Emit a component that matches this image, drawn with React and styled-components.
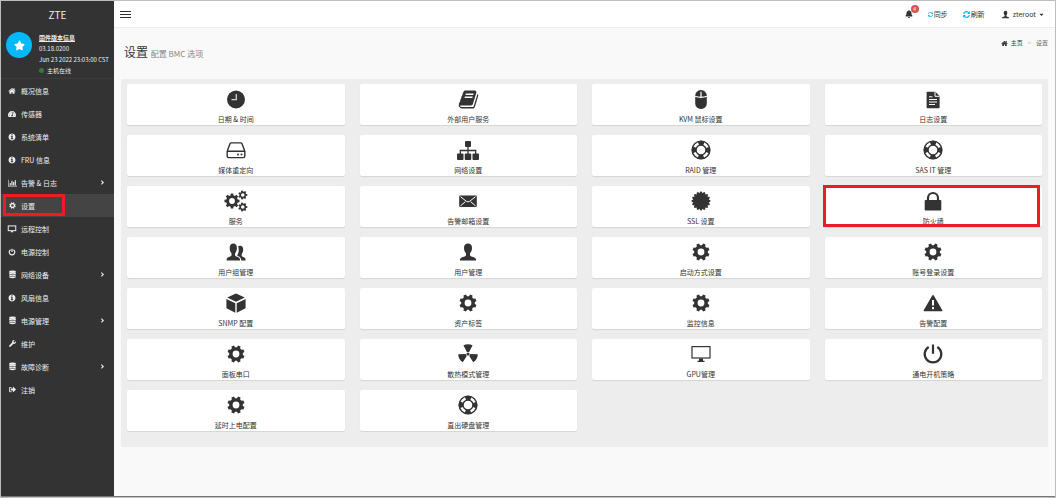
import styled, { createGlobalStyle } from "styled-components"
import {
    FaAngleRight,
    FaBell,
    FaCaretDown,
    FaSignOutAlt,
    FaStar,
    FaSyncAlt,
    FaTachometerAlt,
    FaWrench
} from "react-icons/fa"

const HOME = "M1472 992v480q0 26-19 45t-45 19h-384v-384h-256v384h-384q-26 0-45-19t-19-45v-480q0-1 .5-3t.5-3l575-474 575 474q1 2 1 6zm223-69l-62 74q-8 9-21 11h-3q-13 0-21-7l-692-577-692 577q-12 8-24 7-13-2-21-11l-62-74q-8-10-7-23.5t11-21.5l719-599q32-26 76-26t76 26l244 204v-195q0-14 9-23t23-9h192q14 0 23 9t9 23v408l219 182q10 8 11 21.5t-7 23.5z"
const INFO = "M1152 1376v-160q0-14-9-23t-23-9h-96v-512q0-14-9-23t-23-9h-320q-14 0-23 9t-9 23v160q0 14 9 23t23 9h96v320h-96q-14 0-23 9t-9 23v160q0 14 9 23t23 9h448q14 0 23-9t9-23zm-128-896v-160q0-14-9-23t-23-9h-192q-14 0-23 9t-9 23v160q0 14 9 23t23 9h192q14 0 23-9t9-23zm640 416q0 209-103 385.5t-279.5 279.5-385.5 103-385.5-103-279.5-279.5-103-385.5 103-385.5 279.5-279.5 385.5-103 385.5 103 279.5 279.5 103 385.5z"
const CHART = "M640 896v512h-256v-512h256zm384-512v1024h-256v-1024h256zm1024 1152v128h-2048v-1536h128v1408h1920zm-640-896v768h-256v-768h256zm384-384v1152h-256v-1152h256z"
const BOOK = "M1703 478q40 57 18 129l-275 906q-19 64-76.5 107.5t-122.5 43.5h-923q-77 0-148.5-53.5t-99.5-131.5q-24-67-2-127 0-4 3-27t4-37q1-8-3-21.5t-3-19.5q2-11 8-21t16.5-23.5 16.5-23.5q23-38 45-91.5t30-91.5q3-10 .5-30t-.5-28q3-11 17-28t17-23q21-36 42-92t25-90q1-9-2.5-32t.5-28q4-13 22-30.5t22-22.5q19-26 42.5-84.5t27.5-96.5q1-8-3-25.5t-2-26.5q2-8 9-18t18-23 17-21q8-12 16.5-30.5t15-35 16-36 19.5-32 26.5-23.5 36-11.5 47.5 5.5l-1 3q38-9 51-9h761q74 0 114 56t18 130l-274 906q-36 119-71.5 153.5t-128.5 34.5h-869q-27 0-38 15-11 16-1 43 24 70 144 70h923q29 0 56-15.5t35-41.5l300-987q7-22 5-57 38 15 59 43zm-1064 2q-4 13 2 22.5t20 9.5h608q13 0 25.5-9.5t16.5-22.5l21-64q4-13-2-22.5t-20-9.5h-608q-13 0-25.5 9.5t-16.5 22.5zm-83 256q-4 13 2 22.5t20 9.5h608q13 0 25.5-9.5t16.5-22.5l21-64q4-13-2-22.5t-20-9.5h-608q-13 0-25.5 9.5t-16.5 22.5z"
const PERSON = "M12 3.6c-2.6 0-4 1.8-4 4.4 0 2.3.8 4.2 2 5.3v1.7c0 1-.8 1.3-2.2 1.8-2.3.8-4 1.5-4 3.6h16.4c0-2.1-1.7-2.8-4-3.6-1.4-.5-2.2-.8-2.2-1.8v-1.7c1.2-1.1 2-3 2-5.3 0-2.6-1.4-4.4-4-4.4z"

function polar(r, deg, cx = 12, cy = 12) {
    const a = deg * Math.PI / 180
    return `${(cx + r * Math.cos(a)).toFixed(2)} ${(cy + r * Math.sin(a)).toFixed(2)}`
}

function sealPath() {
    let points = []
    for (let i = 0; i < 16; i++) {
        const a = i * 22.5
        points.push(polar(7.8, a - 11.25), polar(9.4, a - 4), polar(9.4, a + 4))
    }
    return `M${points.join("L")}z`
}

function bladePath(mid) {
    return `M${polar(2.4, mid - 28)}L${polar(9.8, mid - 28)}A9.8 9.8 0 0 1 ${polar(9.8, mid + 28)}L${polar(2.4, mid + 28)}z`
}

function gearPath({ cx = 12, cy = 12, outer, root, hole, teeth = 8, turn = 0 }) {
    const step = 360 / teeth
    let points = []
    for (let i = 0; i < teeth; i++) {
        const a = turn + i * step
        points.push(
            polar(root, a - step * 0.32, cx, cy),
            polar(outer, a - step * 0.2, cx, cy),
            polar(outer, a + step * 0.2, cx, cy),
            polar(root, a + step * 0.32, cx, cy)
        )
    }
    return `M${points.join("L")}zM${cx - hole} ${cy}a${hole} ${hole} 0 1 0 ${hole * 2} 0a${hole} ${hole} 0 1 0 ${-hole * 2} 0z`
}

function Awesome({ d, size, wide }) {
    return (
        <svg width={wide ? size + 1 : size} height={size} viewBox={wide ? "0 0 2048 1792" : "0 0 1792 1792"} fill="currentColor" aria-hidden="true">
            <path d={d} />
        </svg>
    )
}

function Drawing({ size = 24, children }) {
    return (
        <svg width={size} height={size} viewBox="0 0 24 24" fill="currentColor" aria-hidden="true">
            {children}
        </svg>
    )
}

const Cog = ({ size }) => (
    <Drawing size={size}>
        <path fillRule="evenodd" d={gearPath({ outer: 8.7, root: 6.9, hole: 3.4, turn: 22.5 })} />
    </Drawing>
)

const Cogs = () => (
    <Drawing>
        <path fillRule="evenodd" d={gearPath({ cx: 8, outer: 7.6, root: 5.9, hole: 2.9 })} />
        <path fillRule="evenodd" d={gearPath({ cx: 18.8, cy: 6, outer: 4.6, root: 3.4, hole: 1.8, teeth: 7 })} />
        <path fillRule="evenodd" d={gearPath({ cx: 18.8, cy: 18, outer: 4.6, root: 3.4, hole: 1.8, teeth: 7 })} />
    </Drawing>
)

const Book = () => <Awesome d={BOOK} size={21} />

const Clock = () => (
    <Drawing>
        <circle cx="12" cy="12.5" r="9" />
        <path d="M12.3 7v5.6H7.5" fill="none" stroke="#d0d0d0" strokeWidth="1.3" />
    </Drawing>
)

const Mouse = () => (
    <Drawing>
        <rect x="6.2" y="3" width="11.6" height="19" rx="5.6" />
        <path d="M6 9.2q6 2.2 12 0M12 4.8v5" fill="none" stroke="#fff" strokeWidth="1.2" />
    </Drawing>
)

const FileText = () => (
    <Drawing>
        <path d="M5.6 5.500q0-.8.8-.8h8l4.200 4.200v11.500q0 .8-.8.8H6.400q-.8 0-.8-.8z" />
        <path d="M14 5v4.300h4.500M8 9.800h3.500M8 12.500h8M8 15h8M8 17.500h6" fill="none" stroke="#fff" strokeWidth="1" />
    </Drawing>
)

const Disk = () => (
    <Drawing>
        <path d="M3.2 13.2 6 5.700q.3-.8 1.200-.8h9.600q.9 0 1.200.8l2.800 7.500v5q0 1.400-1.400 1.400H4.600q-1.400 0-1.400-1.400zM3.200 13.200h17.600" fill="none" stroke="currentColor" strokeWidth="1.4" />
        <circle cx="14" cy="16.5" r="1" />
        <circle cx="17.5" cy="16.5" r="1" />
    </Drawing>
)

const Sitemap = () => (
    <Drawing>
        <rect x="9" y="3" width="6" height="6" rx="1" />
        <rect x="1" y="15.5" width="6.5" height="6.5" rx="1" />
        <rect x="8.75" y="15.5" width="6.5" height="6.5" rx="1" />
        <rect x="16.5" y="15.5" width="6.5" height="6.5" rx="1" />
        <path d="M12 8v8M4.3 16v-3.5h15.4V16" fill="none" stroke="currentColor" strokeWidth="1.3" />
    </Drawing>
)

const LifeRing = () => (
    <Drawing>
        <g fill="none" stroke="currentColor">
            <circle cx="12" cy="12" r="8.9" strokeWidth="1.4" />
            <circle cx="12" cy="12" r="5" strokeWidth="1.4" />
            <circle cx="12" cy="12" r="7" strokeWidth="4.4" strokeDasharray="5.5 5.495" strokeDashoffset="2.75" />
        </g>
    </Drawing>
)

const Envelope = () => (
    <Drawing>
        <rect x="3.2" y="6.5" width="17.6" height="11.5" rx="1" />
        <path d="m4.5 7.700 6 4.700q1.500 1 3 0l6-4.700M4.500 16.900l4.800-4.200M19.500 16.900l-4.800-4.200" fill="none" stroke="#fff" strokeWidth="1" />
    </Drawing>
)

const Seal = () => (
    <Drawing>
        <path d={sealPath()} />
    </Drawing>
)

const Lock = () => (
    <Drawing>
        <rect x="3.7" y="11" width="16.6" height="10.6" rx="1" />
        <path d="M7 11.500V9a5 5 0 0 1 10 0v2.500" fill="none" stroke="currentColor" strokeWidth="2.2" />
    </Drawing>
)

const Person = ({ size }) => (
    <Drawing size={size}>
        <path d={PERSON} />
    </Drawing>
)

const People = () => (
    <Drawing>
        <path d="M9.300 3.600c-2.400 0-3.600 1.700-3.600 4.300 0 2.300.7 4.200 1.800 5.300v1.800c0 1-.7 1.300-2 1.800-2 .8-3 1.500-3 3.600h13.600c0-2.100-1-2.800-3-3.600-1.300-.5-2-.8-2-1.800v-1.800c1.100-1.100 1.800-3 1.800-5.300 0-2.600-1.200-4.300-3.600-4.300z" />
        <path d="M16 5.800c2.200 0 3.200 1.500 3.200 3.700 0 2-.6 3.500-1.500 4.400v1.600c0 .8.6 1.100 1.600 1.500 1.600.6 2.300 1.300 2.300 3.400h-4.300c0-2-.9-3.300-2.900-4.200-.8-.4-1.100-.6-1.100-1.200 1.100-1.600 1.700-3.600 1.300-6.600-.1-1-.3-1.500-.5-2 .5-.4 1.100-.6 1.900-.6z" />
    </Drawing>
)

const Cube = () => (
    <Drawing>
        <path d="m12 2.600 8.800 3.900L12 10.800 3.200 6.500zM2.400 8l8.900 4.200v9.600L2.900 17.500q-.5-.3-.5-.9zM21.600 8l-8.900 4.200v9.600l8.400-4.300q.5-.3.5-.9z" />
    </Drawing>
)

const Warning = () => (
    <Drawing>
        <path d="M12 4q.5 0 .8.600l8.500 14.700q.5 1-.6 1H3.300q-1.100 0-.6-1l8.500-14.700q.3-.6.800-.6z" />
        <path d="M12 9v5.500M12 16v2.200" stroke="#fff" strokeWidth="2" />
    </Drawing>
)

const Radiation = () => (
    <Drawing>
        <circle cx="12" cy="12" r="1.6" />
        <path d={bladePath(-90) + bladePath(30) + bladePath(150)} />
    </Drawing>
)

const Monitor = ({ size, stroke = 1.2 }) => (
    <Drawing size={size}>
        <rect x="3" y="4.6" width="18" height="11.4" fill="none" stroke="currentColor" strokeWidth={stroke} />
        <path d="M10 16.500h4v2.200h1.500V20h-7v-1.300H10z" />
    </Drawing>
)

const Power = ({ size, stroke = 2.2 }) => (
    <Drawing size={size}>
        <path d="M7.700 5A8.300 8.300 0 1 0 16.300 5M12 2.500v9.300" fill="none" stroke="currentColor" strokeWidth={stroke} />
    </Drawing>
)

const Database = () => (
    <Drawing size={9}>
        <ellipse cx="12" cy="4.5" rx="9" ry="3.2" />
        <path d="M3 6.800q9 4 18 0v3q-9 4.500-18 0zM3 11.800q9 4 18 0v3q-9 4.500-18 0zM3 16.800q9 4 18 0v2.700q-9 5-18 0z" />
    </Drawing>
)

const menu = [
    { label: "概况信息", icon: <Awesome d={HOME} size={8} /> },
    { label: "传感器", icon: <FaTachometerAlt size={8} /> },
    { label: "系统清单", icon: <Awesome d={INFO} size={8} /> },
    { label: "FRU 信息", icon: <Awesome d={INFO} size={8} /> },
    { label: "告警 & 日志", icon: <Awesome d={CHART} size={8} wide />, nested: true },
    { label: "设置", icon: <Cog size={9} />, active: true },
    { label: "远程控制", icon: <Monitor size={10} stroke={2.4} /> },
    { label: "电源控制", icon: <Power size={8} stroke={3.6} /> },
    { label: "网络设备", icon: <Database />, nested: true },
    { label: "风扇信息", icon: <Awesome d={INFO} size={8} /> },
    { label: "电源管理", icon: <Database />, nested: true },
    { label: "维护", icon: <FaWrench size={7} /> },
    { label: "故障诊断", icon: <Database />, nested: true },
    { label: "注销", icon: <FaSignOutAlt size={7} /> }
]

const settings = [
    { label: "日期 & 时间", icon: <Clock /> },
    { label: "外部用户服务", icon: <Book /> },
    { label: "KVM 鼠标设置", icon: <Mouse /> },
    { label: "日志设置", icon: <FileText /> },
    { label: "媒体重定向", icon: <Disk /> },
    { label: "网络设置", icon: <Sitemap /> },
    { label: "RAID 管理", icon: <LifeRing /> },
    { label: "SAS IT 管理", icon: <LifeRing /> },
    { label: "服务", icon: <Cogs /> },
    { label: "告警邮箱设置", icon: <Envelope /> },
    { label: "SSL 设置", icon: <Seal /> },
    { label: "防火墙", icon: <Lock />, marked: true },
    { label: "用户组管理", icon: <People /> },
    { label: "用户管理", icon: <Person /> },
    { label: "启动方式设置", icon: <Cog /> },
    { label: "账号登录设置", icon: <Cog /> },
    { label: "SNMP 配置", icon: <Cube /> },
    { label: "资产标签", icon: <Cog /> },
    { label: "监控信息", icon: <Cog /> },
    { label: "告警配置", icon: <Warning /> },
    { label: "面板串口", icon: <Cog /> },
    { label: "散热模式管理", icon: <Radiation /> },
    { label: "GPU管理", icon: <Monitor /> },
    { label: "通电开机策略", icon: <Power /> },
    { label: "延时上电配置", icon: <Cog /> },
    { label: "直出硬盘管理", icon: <LifeRing /> }
]

export default function App() {
    return (
        <>
            <GlobalStyle />
            <Page>
                <Sidebar>
                    <Brand href="#">ZTE</Brand>
                    <Firmware>
                        <Avatar><FaStar size={11} /></Avatar>
                        <div>
                            <a href="#">固件版本信息</a>
                            <p>03.18.0200</p>
                            <p>Jun 23 2022 23:03:00 CST</p>
                            <Status>主机在线</Status>
                        </div>
                    </Firmware>
                    <Menu>
                        {menu.map(item => (
                            <MenuItem key={item.label}>
                                <MenuLink href="#" $active={item.active}>
                                    <MenuIcon>{item.icon}</MenuIcon>
                                    {item.label}
                                    {item.nested && <FaAngleRight size={7} />}
                                </MenuLink>
                                {item.active && <MenuMark />}
                            </MenuItem>
                        ))}
                    </Menu>
                </Sidebar>
                <Main>
                    <TopBar>
                        <Toggle aria-label="菜单"><span /><span /><span /></Toggle>
                        <Tools>
                            <BellButton aria-label="告警">
                                <FaBell size={8} />
                                <Badge>4</Badge>
                            </BellButton>
                            <Tool><FaSyncAlt size={5} />同步</Tool>
                            <Tool><FaSyncAlt size={7} />刷新</Tool>
                            <UserButton>
                                <Person size={11} />
                                zteroot
                                <FaCaretDown size={7} />
                            </UserButton>
                        </Tools>
                    </TopBar>
                    <Heading>
                        <h1>设置 <small>配置 BMC 选项</small></h1>
                        <Crumbs>
                            <a href="#"><Awesome d={HOME} size={7} />主页</a>
                            <i>&gt;</i>
                            <span>设置</span>
                        </Crumbs>
                    </Heading>
                    <Panel>
                        {settings.map(item => (
                            <Tile href="#" key={item.label}>
                                <TileIcon>{item.icon}</TileIcon>
                                {item.label}
                                {item.marked && <TileMark />}
                            </Tile>
                        ))}
                    </Panel>
                </Main>
            </Page>
        </>
    )
}

const GlobalStyle = createGlobalStyle`
    *{
        box-sizing: border-box;
    }
    body{
        margin: 0;
        font-family: "Noto Sans CJK SC", sans-serif;
        font-size: 7px;
        color: #333;
    }
    a{
        color: inherit;
        text-decoration: none;
    }
    button{
        padding: 0;
        border: 0;
        background: none;
        font: inherit;
        color: inherit;
    }
    h1, p, ul{
        margin: 0;
        padding: 0;
    }
    svg{
        flex-shrink: 0;
    }
`

const Page = styled.div`
    display: flex;
    min-height: 100vh;
    border: 1px solid #bdbdbd;
    background: #f9f9f9;
`

const Sidebar = styled.aside`
    width: 113px;
    flex-shrink: 0;
    background: #333;
    color: #eee;
    border-bottom: 1px solid #777;
`

const Brand = styled.a`
    display: block;
    height: 27px;
    line-height: 27px;
    text-align: center;
    font-size: 10px;
`

const Firmware = styled.div`
    display: flex;
    gap: 7px;
    padding: 4px 0 2px 5px;
    border-bottom: 1px solid #3c3c3c;
    font-size: 6px;
    line-height: 11px;
    white-space: nowrap;
    a{
        display: block;
        font-weight: bold;
        text-decoration: underline;
    }
`

const Avatar = styled.div`
    width: 26px;
    height: 26px;
    border-radius: 50%;
    background: #00b9fb;
    color: #fff;
    display: flex;
    justify-content: center;
    align-items: center;
`

const Status = styled.p`
    display: flex;
    align-items: center;
    gap: 3px;
    &:before{
        content: "";
        width: 5px;
        height: 5px;
        border-radius: 50%;
        background: #3c763d;
    }
`

const Menu = styled.ul`
    list-style: none;
`

const MenuItem = styled.li`
    position: relative;
`

const MenuLink = styled.a`
    display: flex;
    align-items: center;
    height: 23px;
    padding: 0 8px 0 6px;
    background: ${props => props.$active ? "#444" : "transparent"};
    >svg{
        margin-left: auto;
    }
`

const MenuIcon = styled.span`
    width: 10px;
    margin-right: 4px;
    display: flex;
    justify-content: center;
`

const MenuMark = styled.span`
    position: absolute;
    inset: 0 auto 1px 2px;
    width: 62px;
    border: 3px solid #ed1c24;
    pointer-events: none;
`

const Main = styled.main`
    flex: 1;
    min-width: 0;
    border-bottom: 1px solid #777;
`

const TopBar = styled.header`
    display: flex;
    justify-content: space-between;
    align-items: center;
    height: 27px;
    padding: 0 10px 0 6px;
    background: #fff;
    border-bottom: 1px solid #ececec;
`

const Toggle = styled.button`
    display: grid;
    gap: 2px;
    span{
        width: 11px;
        height: 1px;
        background: #333;
    }
`

const Tools = styled.div`
    display: flex;
    align-items: center;
    gap: 15px;
`

const Tool = styled.button`
    display: flex;
    align-items: center;
    gap: 1px;
    svg{
        color: #00b9fb;
    }
`

const BellButton = styled.button`
    position: relative;
    display: flex;
`

const Badge = styled.span`
    position: absolute;
    top: -5px;
    right: -6px;
    width: 8px;
    height: 8px;
    border-radius: 50%;
    background: #d9534f;
    color: #fff;
    font-size: 5px;
    line-height: 8px;
    text-align: center;
`

const UserButton = styled.button`
    display: flex;
    align-items: center;
    gap: 2px;
`

const Heading = styled.div`
    display: flex;
    justify-content: space-between;
    align-items: flex-start;
    padding: 10px 7px 13px 10px;
    h1{
        height: 28px;
        font-size: 12px;
        line-height: 28px;
        font-weight: normal;
    }
    small{
        font-size: 8px;
        color: #888;
    }
`

const Crumbs = styled.nav`
    display: flex;
    gap: 5px;
    font-size: 6px;
    line-height: 10px;
    a{
        display: flex;
        align-items: center;
        gap: 3px;
    }
    i{
        color: #bbb;
        font-style: normal;
    }
    span{
        color: #666;
    }
`

const Panel = styled.section`
    display: grid;
    grid-template-columns: repeat(4, 1fr);
    gap: 10px 15px;
    margin: 0 7px;
    padding: 5px 6px 16px;
    border-radius: 2px;
    background: #ededed;
`

const Tile = styled.a`
    position: relative;
    display: flex;
    flex-direction: column;
    align-items: center;
    padding: 3px 0 1px;
    border-radius: 2px;
    background: #fff;
    box-shadow: 0 1px 1px rgba(0, 0, 0, 0.1);
    line-height: 10px;
`

const TileIcon = styled.span`
    height: 24px;
    margin-bottom: 3px;
    display: flex;
    align-items: center;
`

const TileMark = styled.span`
    position: absolute;
    inset: -1px 2px 0 -2px;
    border: 3px solid #ed1c24;
    pointer-events: none;
`
